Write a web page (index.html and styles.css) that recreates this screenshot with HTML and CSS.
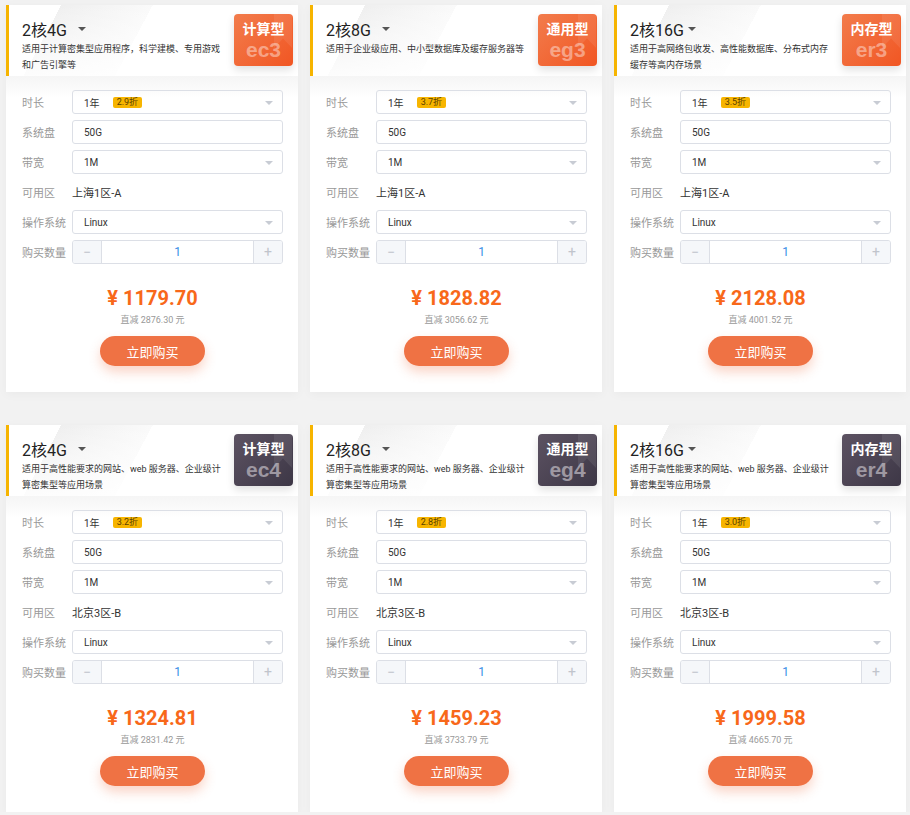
FILE: index.html
```html
<!DOCTYPE html>
<html lang="zh-CN">
<head>
    <meta charset="UTF-8">
    <meta name="viewport" content="width=device-width, initial-scale=1.0">
    <title>云服务器选购</title>
    <link rel="stylesheet" href="styles.css">
</head>
<body>
    <div class="card-list" id="cardList">
        <!-- cards are inserted here -->
    </div>
    <script>
        const products = [
            { title: '2核4G', desc: '适用于计算密集型应用程序，科学建模、专用游戏和广告引擎等', type: '计算型', code: 'ec3', theme: 'orange', discount: '2.9折', zone: '上海1区-A', price: '1179.70', save: '2876.30' },
            { title: '2核8G', desc: '适用于企业级应用、中小型数据库及缓存服务器等', type: '通用型', code: 'eg3', theme: 'orange', discount: '3.7折', zone: '上海1区-A', price: '1828.82', save: '3056.62' },
            { title: '2核16G', desc: '适用于高网络包收发、高性能数据库、分布式内存缓存等高内存场景', type: '内存型', code: 'er3', theme: 'orange', discount: '3.5折', zone: '上海1区-A', price: '2128.08', save: '4001.52' },
            { title: '2核4G', desc: '适用于高性能要求的网站、web 服务器、企业级计算密集型等应用场景', type: '计算型', code: 'ec4', theme: 'dark', discount: '3.2折', zone: '北京3区-B', price: '1324.81', save: '2831.42' },
            { title: '2核8G', desc: '适用于高性能要求的网站、web 服务器、企业级计算密集型等应用场景', type: '通用型', code: 'eg4', theme: 'dark', discount: '2.8折', zone: '北京3区-B', price: '1459.23', save: '3733.79' },
            { title: '2核16G', desc: '适用于高性能要求的网站、web 服务器、企业级计算密集型等应用场景', type: '内存型', code: 'er4', theme: 'dark', discount: '3.0折', zone: '北京3区-B', price: '1999.58', save: '4665.70' }
        ];

        const list = document.getElementById('cardList');

        products.forEach(p => {
            const card = document.createElement('div');
            card.className = 'card';
            card.innerHTML = `
                <div class="card-head">
                    <div class="card-title"><span class="title-text">${p.title}</span><span class="title-caret"></span></div>
                    <p class="card-desc">${p.desc}</p>
                    <div class="type-badge badge-${p.theme}">
                        <span class="type-name">${p.type}</span>
                        <span class="type-code">${p.code}</span>
                    </div>
                </div>
                <div class="card-body">
                    <div class="form-row">
                        <span class="row-label">时长</span>
                        <div class="select-box"><span>1年</span><span class="discount-tag">${p.discount}</span><span class="select-caret"></span></div>
                    </div>
                    <div class="form-row">
                        <span class="row-label">系统盘</span>
                        <div class="select-box"><span>50G</span></div>
                    </div>
                    <div class="form-row">
                        <span class="row-label">带宽</span>
                        <div class="select-box"><span>1M</span><span class="select-caret"></span></div>
                    </div>
                    <div class="form-row">
                        <span class="row-label">可用区</span>
                        <span class="zone-text">${p.zone}</span>
                    </div>
                    <div class="form-row">
                        <span class="row-label">操作系统</span>
                        <div class="select-box"><span>Linux</span><span class="select-caret"></span></div>
                    </div>
                    <div class="form-row">
                        <span class="row-label">购买数量</span>
                        <div class="stepper">
                            <span class="step-btn step-minus">−</span>
                            <span class="step-value">1</span>
                            <span class="step-btn step-plus">+</span>
                        </div>
                    </div>
                    <div class="price">¥ ${p.price}</div>
                    <div class="saving">直减 ${p.save} 元</div>
                    <button type="button" class="buy-btn">立即购买</button>
                </div>
            `;
            list.appendChild(card);
        });
    </script>
</body>
</html>
```

FILE: styles.css
```css
body {
    margin: 0;
    padding: 0;
    background-color: #f2f2f2;
    font-family: 'Roboto', 'Noto Sans CJK SC', sans-serif;
    color: #333;
}
.card-list {
    display: grid;
    grid-template-columns: repeat(3, 292px);
    column-gap: 12px;
    row-gap: 33px;
    padding: 5px 0 0 6px;
}
.card {
    background: #fff;
    box-shadow: 0 2px 10px rgba(0,0,0,0.04);
}
.card-head {
    position: relative;
    height: 71px;
    box-sizing: border-box;
    border-left: 3px solid #f6b400;
    padding: 12px 0 0 13px;
    background:
        linear-gradient(to bottom, rgba(255,255,255,0) 0%, rgba(255,255,255,0.85) 100%),
        linear-gradient(118deg, #fff 0, #fff 16%, #efefef 16%, #fafafa 44%, #fff 44%);
}
.card-title {
    display: flex;
    align-items: center;
    height: 24px;
    font-size: 16px;
    color: #222;
}
.title-text {
    min-width: 52px;
}
.title-caret {
    width: 0;
    height: 0;
    margin-left: 4px;
    border-left: 4px solid transparent;
    border-right: 4px solid transparent;
    border-top: 4px solid #555;
}
.card-desc {
    width: 200px;
    margin: 0;
    font-size: 9px;
    line-height: 16px;
    color: #333;
}
.type-badge {
    position: absolute;
    top: 9px;
    right: 5px;
    width: 59px;
    height: 52px;
    border-radius: 4px;
    overflow: hidden;
    display: flex;
    flex-direction: column;
    align-items: center;
    box-shadow: 0 4px 8px rgba(0,0,0,0.12);
}
.type-badge::after {
    content: '';
    position: absolute;
    top: 0;
    right: 1px;
    width: 18px;
    height: 34px;
    background: rgba(255,255,255,0.08);
    clip-path: polygon(0 0, 100% 0, 100% 100%, 50% 72%, 0 100%);
}
.badge-orange {
    background: linear-gradient(135deg, #f27c4c, #f15623);
}
.badge-dark {
    background: linear-gradient(135deg, #5c5262, #3d3746);
}
.type-name {
    margin-top: 6px;
    font-size: 14px;
    font-weight: bold;
    line-height: 18px;
    color: #fff;
}
.type-code {
    font-family: 'Liberation Sans', Arial, sans-serif;
    font-size: 21px;
    font-weight: bold;
    line-height: 24px;
    color: rgba(255,255,255,0.42);
}
.badge-dark .type-code {
    color: #9e98a2;
}
.card-body {
    padding: 14px 15px 26px 16px;
    background: linear-gradient(#f5f5f5, #fff 22px);
    text-align: center;
}
.form-row {
    display: flex;
    align-items: center;
    height: 24px;
    margin-bottom: 6px;
    text-align: left;
}
.row-label {
    flex: 0 0 50px;
    font-size: 11px;
    color: #999;
}
.select-box {
    position: relative;
    flex: 1;
    height: 24px;
    box-sizing: border-box;
    display: flex;
    align-items: center;
    padding-left: 11px;
    border: 1px solid #dcdfe6;
    border-radius: 3px;
    font-size: 10px;
    color: #333;
}
.discount-tag {
    margin-left: 13px;
    padding: 0 4px;
    height: 11px;
    line-height: 11px;
    border-radius: 2px;
    background: #f7b500;
    color: #5b4000;
    font-size: 9px;
}
.select-caret {
    position: absolute;
    right: 9px;
    top: 10px;
    width: 0;
    height: 0;
    border-left: 4px solid transparent;
    border-right: 4px solid transparent;
    border-top: 4px solid #c8ccd4;
}
.zone-text {
    font-size: 11px;
    color: #333;
}
.stepper {
    flex: 1;
    display: flex;
    height: 24px;
    box-sizing: border-box;
    border: 1px solid #dcdfe6;
    border-radius: 3px;
    overflow: hidden;
}
.step-btn {
    flex: 0 0 28px;
    display: flex;
    align-items: center;
    justify-content: center;
    background: #f5f7fa;
    color: #c0c4cc;
    font-size: 14px;
}
.step-minus {
    border-right: 1px solid #dcdfe6;
}
.step-plus {
    border-left: 1px solid #dcdfe6;
}
.step-value {
    flex: 1;
    text-align: center;
    line-height: 22px;
    font-size: 12px;
    color: #3a8ee6;
}
.price {
    margin-top: 22px;
    font-size: 20px;
    font-weight: bold;
    line-height: 24px;
    color: #f8681a;
}
.saving {
    margin-top: 3px;
    font-size: 9px;
    line-height: 14px;
    color: #999;
}
.buy-btn {
    display: block;
    width: 105px;
    height: 30px;
    margin: 9px auto 0;
    border: none;
    border-radius: 15px;
    background-color: #ef7244;
    color: #fff;
    font-family: 'Noto Sans CJK SC', sans-serif;
    font-size: 13px;
    cursor: pointer;
    box-shadow: 0 6px 12px rgba(239,114,68,0.3);
}
```
